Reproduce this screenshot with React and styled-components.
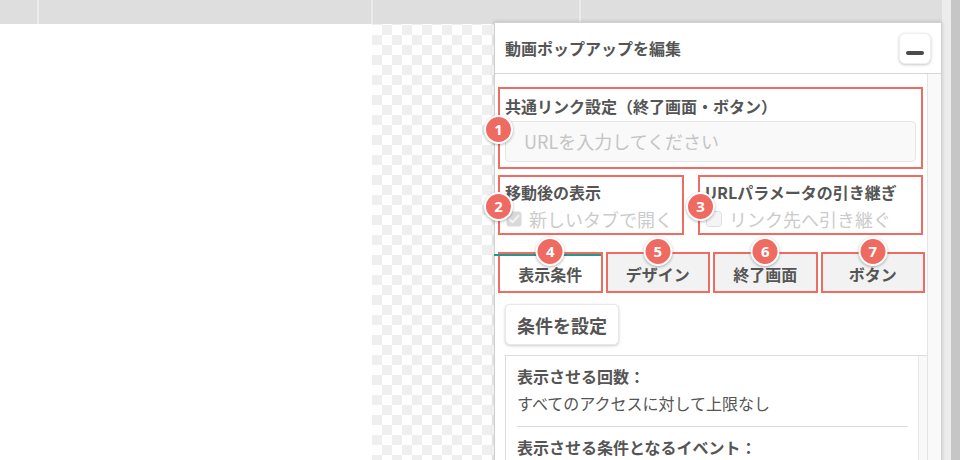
import React from 'react';
import styled, { createGlobalStyle } from 'styled-components';

const GlobalStyle = createGlobalStyle`
  html, body {
    margin: 0;
    padding: 0;
    height: 100%;
    overflow: hidden;
    background: #fff;
    font-family: "Noto Sans CJK JP", "Noto Sans", sans-serif;
  }
  #root {
    height: 100%;
  }
`;

const Page = styled.div`
  position: relative;
  display: flex;
  width: 960px;
  height: 460px;
  overflow: hidden;
`;

const Stage = styled.div`
  flex: 1;
  display: flex;
  flex-direction: column;
`;

const TopBar = styled.div`
  display: flex;
  height: 24px;
  background: #dedede;
`;

const TopCell = styled.div`
  width: ${p => (p.$w ? `${p.$w}px` : 'auto')};
  flex: ${p => (p.$w ? 'none' : '1')};
  border-right: ${p => (p.$w ? '2px solid #ececec' : 'none')};
`;

const Workspace = styled.div`
  flex: 1;
  display: flex;
`;

const LeftPane = styled.div`
  width: 372px;
  background: #fff;
`;

const Canvas = styled.div`
  flex: 1;
  background: repeating-conic-gradient(#efefef 0 25%, #fff 0 50%) 0 1px / 20px 20px;
`;

const PageScroll = styled.div`
  display: flex;
  width: 18px;
`;

const ScrollTrack = styled.div`
  width: 9px;
  background: #ececec;
`;

const ScrollThumb = styled.div`
  flex: 1;
  background: #c6c6c6;
`;

const Panel = styled.div`
  position: absolute;
  top: 22px;
  left: 494px;
  width: 448px;
  height: 460px;
  box-sizing: border-box;
  display: flex;
  flex-direction: column;
  background: #fff;
  border: 1px solid #d0d0d0;
  box-shadow: 0 0 4px rgba(0, 0, 0, 0.18);
`;

const PanelHeader = styled.div`
  display: flex;
  align-items: center;
  justify-content: space-between;
  height: 50px;
  padding: 0 10px;
  border-bottom: 1px solid #d6d6d6;
`;

const PanelTitle = styled.div`
  font-size: 16px;
  font-weight: 700;
  color: #555;
`;

const MinButton = styled.button`
  display: flex;
  align-items: flex-end;
  justify-content: center;
  width: 32px;
  height: 31px;
  padding: 0 0 8px;
  box-sizing: border-box;
  background: #fff;
  border: 1px solid #eee;
  border-radius: 6px;
  box-shadow: 0 1px 3px rgba(0, 0, 0, 0.22);
  cursor: pointer;
`;

const Dash = styled.span`
  width: 18px;
  height: 4px;
  border-radius: 2px;
  background: #4a4a4a;
`;

const PanelBody = styled.div`
  flex: 1;
  display: flex;
  min-height: 0;
`;

const PanelMain = styled.div`
  flex: 1;
  padding: 13px 4px 0 3px;
`;

const PanelTrack = styled.div`
  width: 13px;
  background: #f9f9f9;
  border-left: 1px solid #e4e4e4;
`;

const Marked = styled.div`
  position: relative;
  box-sizing: border-box;
  border: 2px solid #ef6c63;
`;

const LinkSection = styled(Marked)`
  padding: 6px 5px 5px;
`;

const OptionRow = styled.div`
  display: flex;
  gap: 14px;
  margin-top: 6px;
`;

const OptionBox = styled(Marked)`
  width: ${p => (p.$w ? `${p.$w}px` : 'auto')};
  flex: ${p => (p.$w ? 'none' : '1')};
  padding: 4px 5px 2px;
`;

const Label = styled.div`
  font-size: 16px;
  line-height: 22px;
  font-weight: 700;
  color: #555;
  white-space: nowrap;
`;

const UrlInput = styled.input`
  display: block;
  width: 100%;
  height: 41px;
  margin-top: 4px;
  box-sizing: border-box;
  padding: 0 0 2px 18px;
  background: #f9f9f9;
  border: 1px solid #e6e6e6;
  border-radius: 4px;
  font-family: inherit;
  font-size: 18px;
  outline: none;

  &::placeholder {
    color: #c4c4c4;
  }
`;

const CheckLine = styled.label`
  display: flex;
  align-items: center;
  gap: 7px;
  height: 24px;
  margin-top: 4px;
  padding-left: 1px;
  font-size: 18px;
  color: #cbcbcb;
  white-space: nowrap;
`;

const Badge = styled.span`
  position: absolute;
  top: ${p => p.$top}px;
  left: ${p => (p.$center ? '50%' : `${p.$left}px`)};
  transform: ${p => (p.$center ? 'translateX(-50%)' : 'none')};
  z-index: 2;
  display: flex;
  align-items: center;
  justify-content: center;
  width: 29px;
  height: 29px;
  box-sizing: border-box;
  border: 2px solid #fff;
  border-radius: 50%;
  background: #ef6a61;
  box-shadow: 0 1px 3px rgba(0, 0, 0, 0.3);
  color: #fff;
  font-family: "Noto Sans", sans-serif;
  font-size: 15px;
  font-weight: 700;
  line-height: 1;
`;

const Tabs = styled.div`
  display: flex;
  gap: 3px;
  margin: 17px -2px 0 0;
`;

const Tab = styled(Marked)`
  flex: 1;
  padding-top: 4px;
  text-align: center;
  line-height: 33px;
  font-size: 16px;
  font-weight: 700;
  color: #555;
  background: ${p => (p.$active ? '#fff' : '#f2f2f2')};

  &::before {
    content: '';
    display: ${p => (p.$active ? 'block' : 'none')};
    position: absolute;
    top: 0;
    left: -6px;
    right: 0;
    height: 2px;
    background: #1f9a8c;
  }
`;

const SetButton = styled.button`
  display: block;
  height: 41px;
  margin: 11px 0 0 7px;
  padding: 0 11px;
  background: #fff;
  border: 1px solid #e8e8e8;
  border-radius: 5px;
  box-shadow: 0 1px 3px rgba(0, 0, 0, 0.2);
  font-family: inherit;
  font-size: 18px;
  font-weight: 700;
  color: #555;
  cursor: pointer;
`;

const Summary = styled.div`
  display: flex;
  margin: 10px -4px 0 7px;
  height: 140px;
  border-top: 1px solid #dcdcdc;
  border-left: 1px solid #dcdcdc;
`;

const SummaryBody = styled.div`
  flex: 1;
  padding: 8px 10px 0 11px;
`;

const SummaryTrack = styled.div`
  width: 8px;
  background: #f9f9f9;
  border-left: 1px solid #e6e6e6;
`;

const SummaryHead = styled.div`
  font-size: 16px;
  line-height: 24px;
  font-weight: 700;
  color: #555;
`;

const SummaryText = styled.div`
  margin-top: 3px;
  font-size: 16px;
  line-height: 24px;
  color: #555;
`;

const Rule = styled.hr`
  margin: 11px 0 8px;
  border: none;
  border-top: 1px solid #dddddd;
`;

const CheckBoxIcon = ({ checked }) => (
  <svg width="16" height="16" viewBox="0 0 16 16">
    {checked ? (
      <>
        <rect x="0.5" y="0.5" width="15" height="15" rx="3" fill="#d9d9d9" />
        <path d="M3.5 8.3l3 3L12.5 4.8" fill="none" stroke="#f2f2f2" strokeWidth="2.2" strokeLinecap="round" strokeLinejoin="round" />
      </>
    ) : (
      <rect x="0.5" y="0.5" width="15" height="15" rx="3" fill="#f5f5f5" stroke="#dedede" />
    )}
  </svg>
);

const tabs = ['表示条件', 'デザイン', '終了画面', 'ボタン'];

const App = () => (
  <>
    <GlobalStyle />
    <Page>
      <Stage>
        <TopBar>
          <TopCell $w={37} />
          <TopCell $w={332} />
          <TopCell $w={206} />
          <TopCell />
        </TopBar>
        <Workspace>
          <LeftPane />
          <Canvas />
        </Workspace>
      </Stage>
      <PageScroll>
        <ScrollTrack />
        <ScrollThumb />
      </PageScroll>

      <Panel>
        <PanelHeader>
          <PanelTitle>動画ポップアップを編集</PanelTitle>
          <MinButton aria-label="最小化">
            <Dash />
          </MinButton>
        </PanelHeader>
        <PanelBody>
          <PanelMain>
            <LinkSection>
              <Badge $left={-16} $top={26}>1</Badge>
              <Label>共通リンク設定（終了画面・ボタン）</Label>
              <UrlInput placeholder="URLを入力してください" />
            </LinkSection>

            <OptionRow>
              <OptionBox $w={186}>
                <Badge $left={-16} $top={15}>2</Badge>
                <Label>移動後の表示</Label>
                <CheckLine>
                  <CheckBoxIcon checked />
                  新しいタブで開く
                </CheckLine>
              </OptionBox>
              <OptionBox>
                <Badge $left={-14} $top={15}>3</Badge>
                <Label>URLパラメータの引き継ぎ</Label>
                <CheckLine>
                  <CheckBoxIcon />
                  リンク先へ引き継ぐ
                </CheckLine>
              </OptionBox>
            </OptionRow>

            <Tabs>
              {tabs.map((t, i) => (
                <Tab key={t} $active={i === 0}>
                  <Badge $center $top={-17}>{i + 4}</Badge>
                  {t}
                </Tab>
              ))}
            </Tabs>

            <SetButton>条件を設定</SetButton>

            <Summary>
              <SummaryBody>
                <SummaryHead>表示させる回数：</SummaryHead>
                <SummaryText>すべてのアクセスに対して上限なし</SummaryText>
                <Rule />
                <SummaryHead>表示させる条件となるイベント：</SummaryHead>
              </SummaryBody>
              <SummaryTrack />
            </Summary>
          </PanelMain>
          <PanelTrack />
        </PanelBody>
      </Panel>
    </Page>
  </>
);

export default App;
